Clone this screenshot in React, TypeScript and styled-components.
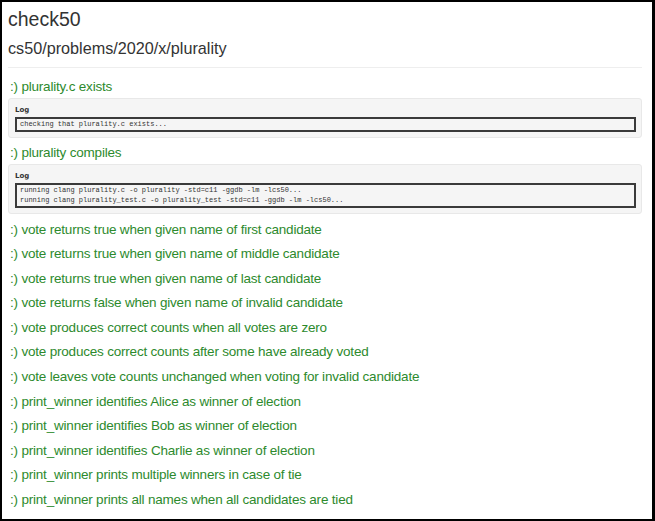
import styled, { createGlobalStyle } from "styled-components";

const GlobalStyle = createGlobalStyle`
  html, body {
    margin: 0;
    padding: 0;
    background: #fff;
  }
  body {
    font-family: "Liberation Sans", Arial, sans-serif;
  }
`;

type Check = {
  name: string;
  log?: string[];
};

const logged: Check[] = [
  { name: "plurality.c exists", log: ["checking that plurality.c exists..."] },
  {
    name: "plurality compiles",
    log: [
      "running clang plurality.c -o plurality -std=c11 -ggdb -lm -lcs50...",
      "running clang plurality_test.c -o plurality_test -std=c11 -ggdb -lm -lcs50...",
    ],
  },
];

const plain = [
  "vote returns true when given name of first candidate",
  "vote returns true when given name of middle candidate",
  "vote returns true when given name of last candidate",
  "vote returns false when given name of invalid candidate",
  "vote produces correct counts when all votes are zero",
  "vote produces correct counts after some have already voted",
  "vote leaves vote counts unchanged when voting for invalid candidate",
  "print_winner identifies Alice as winner of election",
  "print_winner identifies Bob as winner of election",
  "print_winner identifies Charlie as winner of election",
  "print_winner prints multiple winners in case of tie",
  "print_winner prints all names when all candidates are tied",
];

function App() {
  return (
    <>
      <GlobalStyle />
      <Frame>
        <Title>check50</Title>
        <Slug>cs50/problems/2020/x/plurality</Slug>
        <Rule />
        {logged.map((c) => (
          <Section key={c.name}>
            <Heading>:) {c.name}</Heading>
            <Well>
              <LogLabel>Log</LogLabel>
              <Pre>{c.log!.join("\n")}</Pre>
            </Well>
          </Section>
        ))}
        <List>
          {plain.map((name) => (
            <Item key={name}>:) {name}</Item>
          ))}
        </List>
      </Frame>
    </>
  );
}

const Frame = styled.div`
  box-sizing: border-box;
  width: 655px;
  height: 521px;
  overflow: hidden;
  border: 2px solid #000;
  border-right-width: 3px;
  padding: 5px 10px 0 6px;
  background: #fff;
`;

const Title = styled.h1`
  margin: 0;
  font-size: 19.5px;
  font-weight: 400;
  line-height: 24px;
  color: #333;
`;

const Slug = styled.h2`
  margin: 6px 0 0;
  font-size: 16.2px;
  font-weight: 400;
  line-height: 22px;
  color: #333;
`;

const Rule = styled.hr`
  margin: 8px 0 9px;
  border: 0;
  border-top: 1px solid #eee;
`;

const Section = styled.div`
  margin-top: 5px;
`;

const Heading = styled.h4`
  margin: 0 0 1px;
  font-size: 13.5px;
  letter-spacing: -0.2px;
  font-weight: 400;
  line-height: 20px;
  color: #2d8a2d;
  padding-left: 2px;
`;

const Well = styled.div`
  background: #f5f5f5;
  border: 1px solid #e8e8e8;
  border-radius: 3px;
  padding: 7px 5px 5px 6px;
`;

const LogLabel = styled.div`
  font-size: 7px;
  font-weight: 700;
  line-height: 9px;
  color: #333;
  margin-bottom: 2px;
  font-family: "DejaVu Sans", sans-serif;
`;

const Pre = styled.pre`
  margin: 0;
  border: 2px solid #3a3a3a;
  padding: 0 3px;
  font-family: "Liberation Mono", monospace;
  font-size: 7px;
  line-height: 10.5px;
  color: #333;
  white-space: pre;
`;

const List = styled.div`
  margin-top: 4px;
`;

const Item = styled.div`
  font-size: 13.5px;
  letter-spacing: -0.2px;
  line-height: 24.6px;
  color: #2d8a2d;
  padding-left: 2px;
`;

export default App;
